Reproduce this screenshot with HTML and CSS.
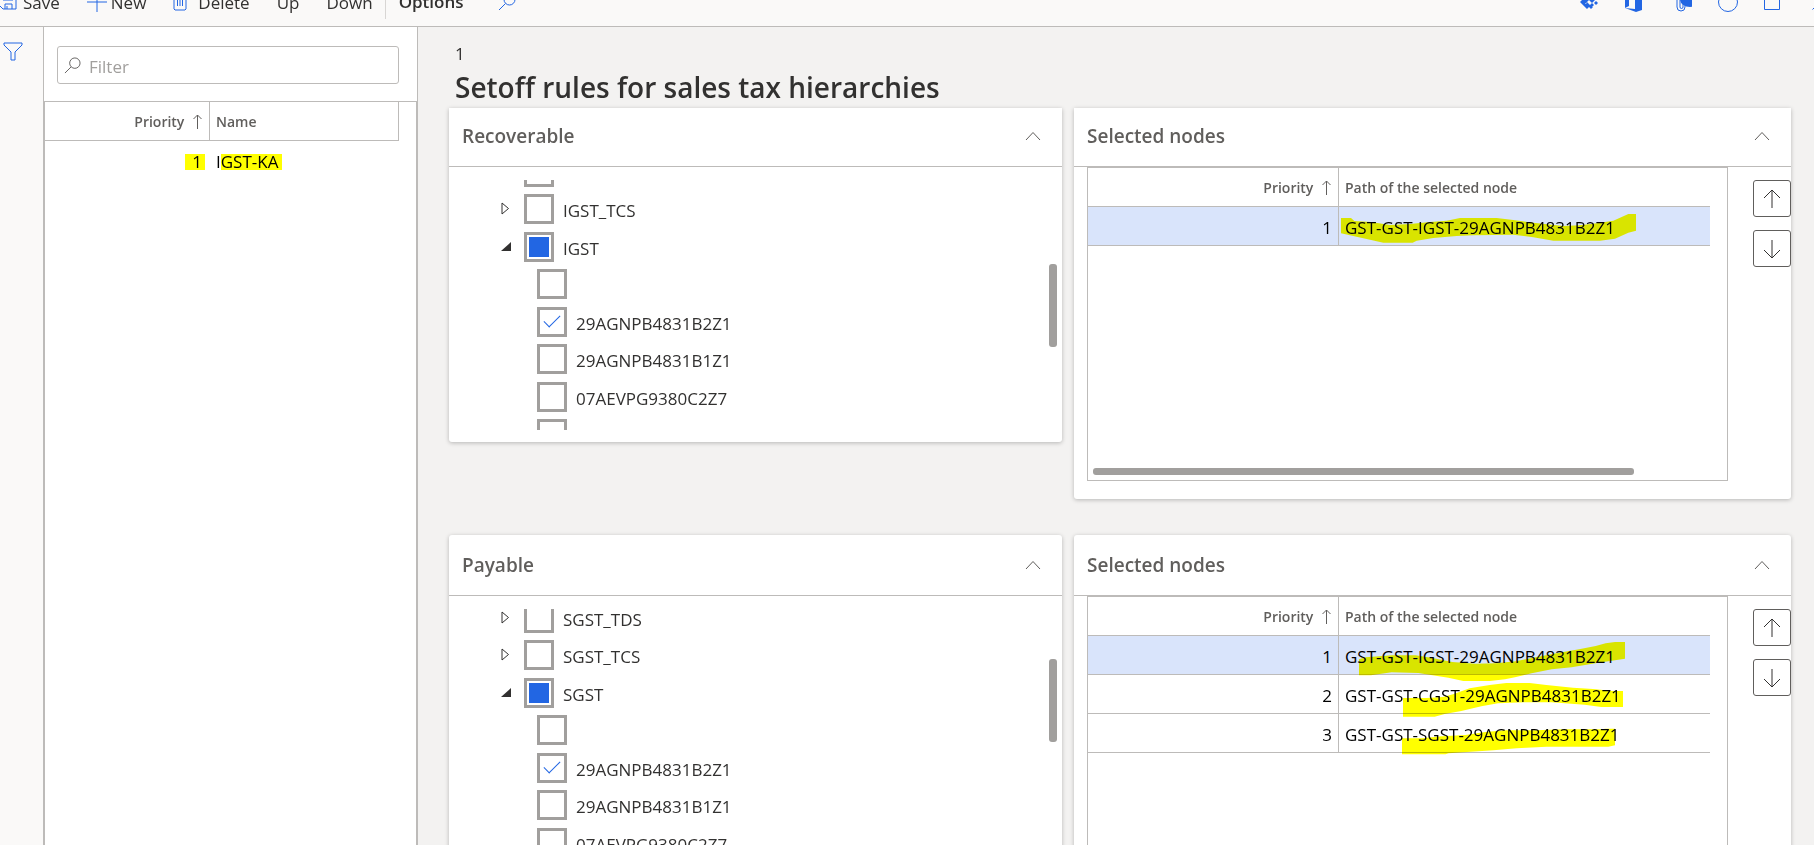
FILE: index.html
```html
<!DOCTYPE html>
<html lang="en">
<head>
  <meta charset="UTF-8">
  <title>Setoff rules for sales tax hierarchies</title>
  <link rel="stylesheet" href="styles.css">
</head>
<body>

<!-- shared icons -->
<svg class="sprite" aria-hidden="true">
  <symbol id="chevron" viewBox="0 0 16 10"><path d="M1 9 8 1.500l7 7.500"/></symbol>
  <symbol id="arrow-up" viewBox="0 0 18 20"><path d="M9 19V1M1 9l8-8 8 8"/></symbol>
  <symbol id="arrow-down" viewBox="0 0 18 20"><path d="M9 1v18M1 11l8 8 8-8"/></symbol>
  <symbol id="sort" viewBox="0 0 9 16"><path d="M4.500 15V1M.5 5l4-4 4 4"/></symbol>
  <symbol id="search" viewBox="0 0 18 18"><circle cx="11.500" cy="6.500" r="5.500"/><path d="M7.500 10.500 1 17"/></symbol>
</svg>

<header class="toolbar">
  <button class="tool"><svg width="17" height="16" viewBox="0 0 17 16"><path d="M0 1h15l1 1v13H3l-3-3M3 1v5h10V1M5 15v-5h7v5M7 15v-3"/></svg>Save</button>
  <button class="tool tool-new"><svg width="20" height="20" viewBox="0 0 20 20"><path d="M10 0v20M0 10h20"/></svg>New</button>
  <button class="tool tool-delete"><svg width="14" height="18" viewBox="0 0 14 18"><path d="M0 3h14M4 3V1h6v2M1 3v13l1 1h10l1-1V3M4.500 5v8M7 5v8M9.500 5v8"/></svg>Delete</button>
  <button class="tool">Up</button>
  <button class="tool">Down</button>
  <button class="tool tool-options">Options</button>
  <button class="tool tool-search" aria-label="Search"><svg width="18" height="18"><use href="#search"/></svg></button>
  <div class="tool-right">
    <button class="tool" aria-label="Power Apps"><svg class="solid" width="20" height="24" viewBox="0 0 20 24"><path d="M5 5l5 5-4 4-5-5zM8 12l3 3 2-2 2 2-3 3-2-1-2 2-7-7 2-2 4 4zM13 7l3 3-3 3-3-3zM12 15l2 2-2 2-2-2zM17 11l2 2-2 2-2-2z"/></svg></button>
    <button class="tool" aria-label="Office"><svg class="solid" width="17" height="20" viewBox="0 0 17 20"><path d="M0 4 11 0l6 2v16l-6 2L0 16l10 1V4L4 5v9l-4 2z"/></svg></button>
    <button class="tool" aria-label="Attachments"><svg width="24" height="20" viewBox="-8 0 24 20"><path d="M1 2v13a4 4 0 0 0 8 0V4M4 4v11a1.500 1.500 0 0 0 3 0V4"/><ellipse class="solid" cx="14" cy="7" rx="10" ry="8"/></svg></button>
    <button class="tool" aria-label="Refresh"><svg width="20" height="20" viewBox="0 0 20 20"><circle cx="10" cy="10" r="9.500"/></svg></button>
    <button class="tool" aria-label="Open in new window"><svg width="16" height="24" viewBox="0 0 16 24"><path d="M.5 4.500h15v15H.5z"/></svg></button>
    <button class="tool tool-close" aria-label="Close"><svg width="16" height="24" viewBox="0 0 16 24"><path d="M.5 4.500l15 15M15.500 4.500l-15 15"/></svg></button>
  </div>
</header>

<div class="page">
  <nav class="rail">
    <button class="rail-button" aria-label="Show filters"><svg width="20" height="19" viewBox="0 0 20 19"><path d="M1 1h18v2l-7 7v8H8v-8L1 3z"/></svg></button>
  </nav>

  <aside class="list">
    <div class="filter">
      <svg width="17" height="17"><use href="#search"/></svg>
      <input type="text" placeholder="Filter" aria-label="Filter">
    </div>
    <div class="list-grid">
      <table class="grid">
        <thead>
          <tr><th class="num">Priority <svg width="9" height="16"><use href="#sort"/></svg></th><th>Name</th></tr>
        </thead>
        <tbody>
          <tr><td class="num"><mark class="mark-num">1</mark></td><td>I<mark class="mark-name">GST-KA</mark></td></tr>
        </tbody>
      </table>
    </div>
  </aside>

  <main class="main">
    <div class="heading">
      <div class="record">1</div>
      <h1>Setoff rules for sales tax hierarchies</h1>
    </div>

    <div class="cards">
      <section class="card card-top">
        <div class="card-head"><h2>Recoverable</h2><button class="fold" aria-label="Collapse"><svg width="16" height="10"><use href="#chevron"/></svg></button></div>
        <div class="tree">
          <ul class="tree-recoverable">
            <li><span class="twisty"></span><input type="checkbox" id="r0"><label for="r0"></label></li>
            <li><span class="twisty"><svg width="9" height="13" viewBox="0 0 9 13"><path d="M1 1v11l6.500-5.500z"/></svg></span><input type="checkbox" id="r1"><label for="r1">IGST_TCS</label></li>
            <li><span class="twisty open"><svg width="10" height="10" viewBox="0 0 10 10"><path d="M10 0v9H0z"/></svg></span><input type="checkbox" class="partial" id="r2"><label for="r2">IGST</label></li>
            <li class="leaf"><input type="checkbox" id="r3"><label for="r3"></label></li>
            <li class="leaf"><input type="checkbox" id="r4" checked><label for="r4">29AGNPB4831B2Z1</label></li>
            <li class="leaf"><input type="checkbox" id="r5"><label for="r5">29AGNPB4831B1Z1</label></li>
            <li class="leaf"><input type="checkbox" id="r6"><label for="r6">07AEVPG9380C2Z7</label></li>
            <li class="leaf"><input type="checkbox" id="r7"><label for="r7"></label></li>
          </ul>
          <div class="scroll-y scroll-recoverable"></div>
        </div>
      </section>

      <section class="card card-top">
        <div class="card-head"><h2>Selected nodes</h2><button class="fold" aria-label="Collapse"><svg width="16" height="10"><use href="#chevron"/></svg></button></div>
        <div class="nodes">
          <div class="nodes-grid">
            <table class="grid">
              <thead>
                <tr><th class="num">Priority <svg width="9" height="16"><use href="#sort"/></svg></th><th>Path of the selected node</th></tr>
              </thead>
              <tbody>
                <tr class="selected"><td class="num">1</td><td>GST-GST-IGST-29AGNPB4831B2Z1
                  <svg class="marker" width="301" height="39" viewBox="117 21 903 117"><path d="M123 54h30l10 9 50 3 57 9 60-3 60-6 50-4 40-8h110l50 6 60 8 90 10 50-2 50-6 50-8 45-20h23v50l-23 6-40 18-45 6H760l-60-10-60-8-120 2-50 2-70 6-50 8-12 6h-88l-40-9-87-19z"/></svg></td></tr>
              </tbody>
            </table>
            <div class="scroll-x"></div>
          </div>
          <div class="movers">
            <button aria-label="Move up"><svg width="18" height="20"><use href="#arrow-up"/></svg></button>
            <button aria-label="Move down"><svg width="18" height="20"><use href="#arrow-down"/></svg></button>
          </div>
        </div>
      </section>

      <section class="card">
        <div class="card-head"><h2>Payable</h2><button class="fold" aria-label="Collapse"><svg width="16" height="10"><use href="#chevron"/></svg></button></div>
        <div class="tree">
          <ul class="tree-payable">
            <li><span class="twisty"><svg width="9" height="13" viewBox="0 0 9 13"><path d="M1 1v11l6.500-5.500z"/></svg></span><input type="checkbox" id="p0"><label for="p0">SGST_TDS</label></li>
            <li><span class="twisty"><svg width="9" height="13" viewBox="0 0 9 13"><path d="M1 1v11l6.500-5.500z"/></svg></span><input type="checkbox" id="p1"><label for="p1">SGST_TCS</label></li>
            <li><span class="twisty open"><svg width="10" height="10" viewBox="0 0 10 10"><path d="M10 0v9H0z"/></svg></span><input type="checkbox" class="partial" id="p2"><label for="p2">SGST</label></li>
            <li class="leaf"><input type="checkbox" id="p3"><label for="p3"></label></li>
            <li class="leaf"><input type="checkbox" id="p4" checked><label for="p4">29AGNPB4831B2Z1</label></li>
            <li class="leaf"><input type="checkbox" id="p5"><label for="p5">29AGNPB4831B1Z1</label></li>
            <li class="leaf"><input type="checkbox" id="p6"><label for="p6">07AEVPG9380C2Z7</label></li>
          </ul>
          <div class="scroll-y scroll-payable"></div>
        </div>
      </section>

      <section class="card">
        <div class="card-head"><h2>Selected nodes</h2><button class="fold" aria-label="Collapse"><svg width="16" height="10"><use href="#chevron"/></svg></button></div>
        <div class="nodes">
          <div class="nodes-grid">
            <table class="grid">
              <thead>
                <tr><th class="num">Priority <svg width="9" height="16"><use href="#sort"/></svg></th><th>Path of the selected node</th></tr>
              </thead>
              <tbody>
                <tr class="selected"><td class="num">1</td><td>GST-GST-IGST-29AGNPB4831B2Z1
                  <svg class="marker" width="301" height="39" viewBox="117 18 903 117"><path d="M177 88l20-6 80-6h70l50 8 60 12 70 5 60-1 60-6 60-12 70-14 60-10 50-10 30-8 28-4h30v50l-20 3-60 9-80 14-60 6-60 12-50 12-30 6-45 5h-80l-45-10-90-14-80-2-62 9h-36z"/></svg></td></tr>
                <tr><td class="num">2</td><td>GST-GST-CGST-29AGNPB4831B2Z1
                  <svg class="marker" width="301" height="39" viewBox="117 135 903 117"><path d="M309 204h70l50-3 30-8 50-18 60-10 50-6h70l50 6 80 8 60 4 60 6h30v48h-65l-50-7-100-7h-80l-80 3-50 9-60 14-50 9-30 8H309z"/></svg></td></tr>
                <tr><td class="num">3</td><td>GST-GST-SGST-29AGNPB4831B2Z1
                  <svg class="marker" width="301" height="39" viewBox="117 252 903 117"><path d="M306 325h60l60-6 70-4 60-9 60-5h90l90-3h110l10-2h29v50l-20 4H740l-90 5-70 6-90 6-44 3-10 3H306z"/></svg></td></tr>
              </tbody>
            </table>
          </div>
          <div class="movers">
            <button aria-label="Move up"><svg width="18" height="20"><use href="#arrow-up"/></svg></button>
            <button aria-label="Move down"><svg width="18" height="20"><use href="#arrow-down"/></svg></button>
          </div>
        </div>
      </section>
    </div>
  </main>
</div>

</body>
</html>
```
FILE: styles.css
```css
* {
  box-sizing: border-box;
}

body {
  margin: 0;
  height: 100vh;
  overflow: hidden;
  display: flex;
  flex-direction: column;
  background: #f3f2f1;
  color: #323130;
  font-family: "Open Sans", "Noto Sans", sans-serif;
  font-size: 17px;
}

button,
input {
  font: inherit;
  color: inherit;
}

button {
  padding: 0;
  border: none;
  background: none;
  cursor: pointer;
}

svg {
  fill: none;
  stroke: currentColor;
  stroke-width: 1;
  flex: none;
}

.sprite {
  display: none;
}

.solid {
  fill: currentColor;
  stroke: none;
}

/* toolbar */
.toolbar {
  flex: none;
  height: 27px;
  display: flex;
  align-items: flex-end;
  gap: 27px;
  overflow: hidden;
  background: #faf9f8;
  border-bottom: 1px solid #bdbbb9;
}

.tool {
  height: 48px;
  display: flex;
  align-items: center;
  gap: 6px;
  flex: none;
}

.tool svg {
  color: #2266e3;
}

.tool-new {
  gap: 4px;
}

.tool-delete {
  gap: 11px;
}

/* the divider stops short of the toolbar edge */
.tool-options {
  height: 35px;
  margin: 0 7px 7px -15px;
  padding: 0 0 1px 13px;
  border-left: 1px solid #d8d6d4;
  font-weight: 600;
}

.tool-right {
  margin-left: auto;
  margin-right: -14px;
  display: flex;
  gap: 26px;
}

.tool-close {
  margin-left: 6px;
}

/* page */
.page {
  flex: 1;
  min-height: 0;
  display: flex;
}

.rail {
  flex: none;
  width: 43px;
  background: #faf9f8;
}

.rail-button {
  margin: 15px 3px;
  color: #2266e3;
}

.list {
  flex: none;
  width: 375px;
  background: #fff;
  border: 1px solid #bdbbb9;
  border-width: 0 1px;
}

.filter {
  height: 38px;
  margin: 19px 18px 17px 13px;
  padding: 0 6px;
  display: flex;
  align-items: center;
  gap: 8px;
  border: 1px solid #bdbbb9;
  border-radius: 3px;
  color: #605e5c;
}

.filter input {
  flex: 1;
  min-width: 0;
  padding: 2px 0 0;
  border: none;
  outline: none;
  background: none;
}

.filter input::placeholder {
  color: #a19f9d;
}

.list-grid {
  height: 100%;
  padding-right: 17px;
  border: 1px solid #bdbbb9;
}

/* grids */
.grid {
  width: 100%;
  table-layout: fixed;
  border-collapse: separate;
  border-spacing: 0;
}

.grid th,
.grid td {
  position: relative;
  height: 39px;
  padding: 0 6px;
  text-align: left;
  white-space: nowrap;
  border-bottom: 1px solid #bdbbb9;
}

.grid th {
  font-size: 14px;
  font-weight: 600;
  color: #605e5c;
}

.grid td {
  padding-top: 2px;
  color: #000;
}

.grid .num {
  width: 251px;
  text-align: right;
  border-right: 1px solid #bdbbb9;
}

.grid th.num svg {
  margin: -2px 1px 0 5px;
  vertical-align: middle;
}

.list .grid .num {
  width: 165px;
}

.list .grid th:last-child {
  border-right: 1px solid #bdbbb9;
}

.list .grid td {
  border-color: transparent;
}

.list .grid td.num {
  padding-right: 4px;
}

.selected td {
  background: #d9e4fb;
}

mark {
  background: #ff0;
  color: #000;
  line-height: 16px;
  display: inline-block;
}

.mark-num {
  padding: 0 3px 0 7px;
}

.mark-name {
  padding-right: 4px;
}

.marker {
  position: absolute;
  left: 0;
  top: 0;
  overflow: visible;
  fill: #ff0;
  stroke: none;
  mix-blend-mode: multiply;
  pointer-events: none;
}

/* main */
.main {
  flex: 1;
  min-width: 0;
  padding: 0 23px 0 31px;
}

.heading {
  height: 81px;
  padding: 15px 6px 0;
}

.record {
  line-height: 24px;
}

h1 {
  margin: 0;
  font-size: 28px;
  line-height: 42px;
  font-weight: 600;
}

.cards {
  display: grid;
  grid-template-columns: 613fr 717fr;
  gap: 36px 12px;
  align-items: start;
}

.card {
  background: #fff;
  border-radius: 3px;
  box-shadow: 0 1px 4px rgba(0, 0, 0, 0.25);
}

.card-top {
  border-radius: 0 0 3px 3px;
}

.card-head {
  height: 61px;
  padding: 0 21px 0 13px;
  display: flex;
  align-items: center;
  justify-content: space-between;
  border-bottom: 1px solid #bdbbb9;
  color: #605e5c;
}

.card-top .card-head {
  height: 59px;
  padding-bottom: 2px;
}

h2 {
  margin: 0;
  font-size: 19px;
  font-weight: 600;
}

.fold {
  display: flex;
}

/* tree */
.tree {
  height: 250px;
  margin: 13px 5px 12px;
  display: flex;
  justify-content: space-between;
  overflow: hidden;
}

.tree ul {
  list-style: none;
  margin: 0;
  padding: 0 0 0 47px;
}

.tree .tree-recoverable {
  margin-top: -27px;
}

.tree .tree-payable {
  margin-top: -10px;
}

.tree li {
  height: 37px;
  padding-top: 4px;
  display: flex;
}

.tree li:nth-child(even) {
  height: 38px;
}

.tree .leaf {
  padding-left: 36px;
}

.twisty {
  width: 23px;
  padding-top: 8px;
  line-height: 0;
}

.twisty.open {
  padding-top: 10px;
}

.open svg {
  fill: currentColor;
  stroke: none;
}

.tree input {
  appearance: none;
  width: 30px;
  height: 30px;
  margin: 0;
  flex: none;
  display: grid;
  place-items: center;
  border: 3px solid #a19f9d;
  background: #fff;
}

.partial::before {
  content: "";
  width: 20px;
  height: 20px;
  background: #2266e3;
}

.tree input:checked::before {
  content: "";
  width: 15px;
  height: 7px;
  border: solid #2266e3;
  border-width: 0 0 1px 1px;
  transform: translateY(-3px) rotate(-45deg);
}

.tree label {
  padding: 2px 0 0 9px;
  line-height: 30px;
}

.scroll-y {
  width: 8px;
  height: 83px;
  border-radius: 3px;
  background: #a19f9d;
}

.scroll-recoverable {
  margin-top: 84px;
}

.scroll-payable {
  margin-top: 50px;
}

/* selected nodes */
.nodes {
  display: flex;
  justify-content: space-between;
  padding: 0 0 18px 13px;
}

.nodes-grid {
  flex: 1;
  height: 314px;
  margin-right: 25px;
  padding-right: 17px;
  display: flex;
  flex-direction: column;
  justify-content: space-between;
  border: 1px solid #bdbbb9;
}

.scroll-x {
  width: 87%;
  height: 7px;
  margin: 0 0 5px 5px;
  border-radius: 3px;
  background: #a19f9d;
}

.movers {
  padding-top: 13px;
  display: flex;
  flex-direction: column;
  gap: 13px;
}

.movers button {
  width: 38px;
  height: 37px;
  display: grid;
  place-items: center;
  border: 1px solid #605e5c;
  border-radius: 3px;
}
```
